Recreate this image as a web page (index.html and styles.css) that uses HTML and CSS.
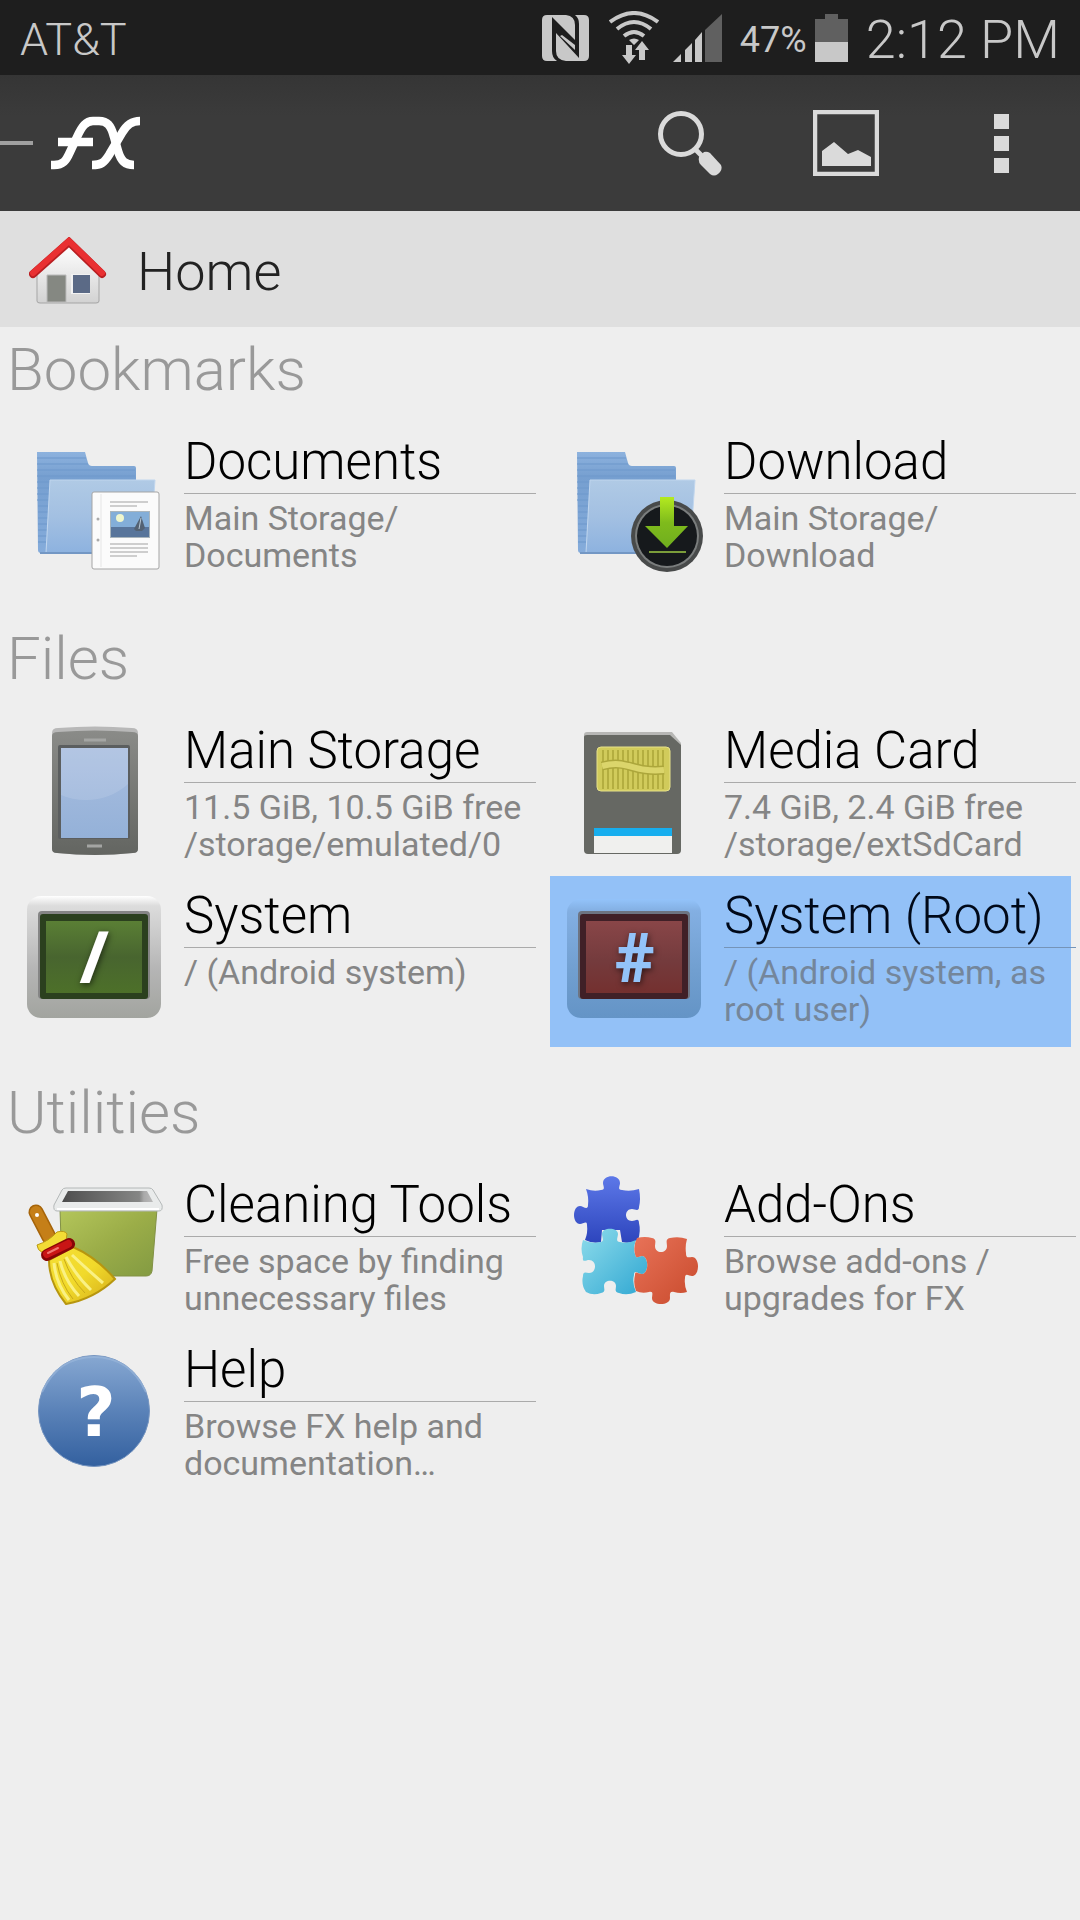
FILE: index.html
```html
<!DOCTYPE html>
<html lang="en">
<head>
<meta charset="utf-8">
<meta name="viewport" content="width=device-width, initial-scale=1">
<title>FX File Explorer</title>
<link rel="stylesheet" href="styles.css">
</head>
<body>
<svg class="defs" width="0" height="0" aria-hidden="true">
  <defs>
    <linearGradient id="folderBack" x1="0" y1="0" x2="0" y2="1"><stop offset="0" stop-color="#8db2de"/><stop offset="0.25" stop-color="#769fd0"/><stop offset="1" stop-color="#85acdb"/></linearGradient>
    <linearGradient id="folderFront" x1="0" y1="0" x2="0" y2="1"><stop offset="0" stop-color="#b0cae5"/><stop offset="0.5" stop-color="#a3c0e2"/><stop offset="1" stop-color="#8db2df"/></linearGradient>
    <linearGradient id="arrowGreen" x1="0" y1="0" x2="0" y2="1"><stop offset="0" stop-color="#b4ea20"/><stop offset="0.5" stop-color="#7fbb1c"/><stop offset="1" stop-color="#6fae1e"/></linearGradient>
    <linearGradient id="steel" x1="0" y1="0" x2="0" y2="1"><stop offset="0" stop-color="#8a8b88"/><stop offset="1" stop-color="#636561"/></linearGradient>
    <linearGradient id="glass" x1="0" y1="0" x2="0" y2="1"><stop offset="0" stop-color="#a9bee0"/><stop offset="1" stop-color="#94b1d8"/></linearGradient>
    <linearGradient id="silver" x1="0" y1="0" x2="0" y2="1"><stop offset="0" stop-color="#fff"/><stop offset="0.08" stop-color="#dcdcdc"/><stop offset="0.6" stop-color="#b5b5b5"/><stop offset="1" stop-color="#a2a49f"/></linearGradient>
    <linearGradient id="silverTint" x1="0" y1="0" x2="0" y2="1"><stop offset="0" stop-color="#93c3fa"/><stop offset="0.1" stop-color="#83afe2"/><stop offset="0.6" stop-color="#719fd0"/><stop offset="1" stop-color="#6494c6"/></linearGradient>
    <linearGradient id="green" x1="0" y1="0" x2="0" y2="1"><stop offset="0" stop-color="#5a7f35"/><stop offset="0.5" stop-color="#48652f"/><stop offset="1" stop-color="#4d7029"/></linearGradient>
    <linearGradient id="maroon" x1="0" y1="0" x2="0" y2="1"><stop offset="0" stop-color="#894648"/><stop offset="0.55" stop-color="#743b3d"/><stop offset="1" stop-color="#74302f"/></linearGradient>
    <linearGradient id="bin" x1="0" y1="0" x2="1" y2="1"><stop offset="0" stop-color="#b4c65b"/><stop offset="0.5" stop-color="#9bad48"/><stop offset="1" stop-color="#829a42"/></linearGradient>
    <linearGradient id="binInside" x1="0" y1="0" x2="1" y2="0"><stop offset="0" stop-color="#4a4a4a"/><stop offset="0.1" stop-color="#555"/><stop offset="0.85" stop-color="#858685"/><stop offset="0.9" stop-color="#aaa"/><stop offset="1" stop-color="#bbb"/></linearGradient>
    <linearGradient id="bristle" x1="0" y1="0" x2="1" y2="1"><stop offset="0" stop-color="#f4de35"/><stop offset="0.5" stop-color="#f1da2b"/><stop offset="1" stop-color="#d3aa18"/></linearGradient>
    <linearGradient id="helpBlue" x1="0" y1="0" x2="0" y2="1"><stop offset="0" stop-color="#87a8d2"/><stop offset="0.5" stop-color="#5a82b8"/><stop offset="1" stop-color="#33609f"/></linearGradient>
    <linearGradient id="pieceBlue" x1="0" y1="0" x2="0" y2="1"><stop offset="0" stop-color="#5d78e8"/><stop offset="1" stop-color="#2d45bd"/></linearGradient>
    <linearGradient id="pieceCyan" x1="0" y1="0" x2="1" y2="1"><stop offset="0" stop-color="#8edceb"/><stop offset="1" stop-color="#30a7d2"/></linearGradient>
    <linearGradient id="pieceRed" x1="0" y1="0" x2="1" y2="1"><stop offset="0" stop-color="#e87258"/><stop offset="1" stop-color="#c84a2c"/></linearGradient>
    <linearGradient id="wall" x1="0" y1="0" x2="0" y2="1"><stop offset="0" stop-color="#fff"/><stop offset="1" stop-color="#d2d2d2"/></linearGradient>
    <symbol id="folder" viewBox="0 0 184 160">
      <path d="M37 30H85L88 41Q89 44 92 44H134Q136 44 136 46V131H41Q38 131 38 128Z" fill="url(#folderBack)"/>
      <path d="M37 36H86M37 42H88M37 48H135M37 54H135M37 60H50M37 66H49M37 72H49M37 78H49M38 84H48M38 90H48M38 96H48M38 102H47M38 108H47M38 114H47M38 120H46" stroke="#6f9acd" stroke-width="2" opacity=".55"/>
      <path d="M50 58H155L150 131H46Z" fill="url(#folderFront)" stroke="#c0d6ee"/>
      <path d="M40 131H150" stroke="#7397c4" stroke-width="2"/>
    </symbol>
  </defs>
</svg>

<header class="top">
  <div class="status">
    <span class="carrier">AT&amp;T</span>
    <svg class="nfc" width="47" height="46" viewBox="0 0 47 46" role="img" aria-label="NFC">
      <path fill="#c8c8c8" d="M5 0H24Q33 1 33 10V25L10 2V36Q10 43 15 46H5Q0 46 0 41V5Q0 0 5 0ZM33 0H42Q47 0 47 5V41Q47 46 42 46H24Q14 45 14 36V18L37 43V9Q37 3 33 0Z"/>
      <path d="M18 20L33 34V27L18 13Z" fill="#1e1e1e"/>
      <path d="M18 21L33 35V30L20 20Z" fill="#c8c8c8"/>
    </svg>
    <svg class="wifi" width="50" height="53" viewBox="0 0 50 53" role="img" aria-label="Wi-Fi">
      <g fill="none" stroke="#c8c8c8" stroke-width="4"><path d="M1 11Q25-7 49 11"/><path d="M8 18Q25 4 42 18"/><path d="M15 25Q25 17 35 25"/></g>
      <path fill="#c8c8c8" d="M20 29Q25 26 30 29L25 34ZM17 34H23V44H27L20 53 13 44H17ZM33 30L40 39H36V49H30V39H26Z"/>
    </svg>
    <svg class="signal" width="49" height="48" viewBox="0 0 49 48" role="img" aria-label="Signal">
      <path fill="#c8c8c8" d="M0 48L8 40V48ZM12 36L19 29V48H12ZM22 26L29 18V48H22Z"/><path fill="#606060" d="M32 16L49 0V48H32Z"/>
    </svg>
    <span class="percent">47%</span>
    <svg class="battery" width="33" height="48" viewBox="0 0 33 48" role="img" aria-label="Battery"><path fill="#606060" d="M10 0H23V5H33V28H0V5H10Z"/><path fill="#c8c8c8" d="M0 28H33V48H0Z"/></svg>
    <time class="clock">2:12 PM</time>
  </div>
  <div class="actions">
    <button class="drawer" type="button" aria-label="Open menu">
      <svg width="142" height="60" viewBox="0 0 142 60">
        <path d="M0 30H33" stroke="#a0a0a0" stroke-width="4"/>
        <g fill="none" stroke="#fff" stroke-width="8.500">
          <path d="M51 52H54C63 52 66 48 70 39L77 24C82 13 86 8 93 8H99C107 8 111 12 114 24L118 38C121 48 125 52 134 52"/>
          <path d="M58 29H93"/>
          <path d="M140 8C132 8 127 11 122 20L109 42C104 50 101 52 92 52"/>
        </g>
      </svg>
    </button>
    <button class="action" type="button" aria-label="Search">
      <svg width="66" height="66" viewBox="0 0 66 66"><circle cx="24" cy="24" r="20.500" fill="none" stroke="#dadada" stroke-width="5"/><path d="M38 39L45 46" stroke="#dadada" stroke-width="5"/><path d="M42 47Q41 52 44 55L53 64Q57 67 61 64 66 60 64 55L53 43Q50 41 47 42Z" fill="#dadada"/></svg>
    </button>
    <button class="action" type="button" aria-label="Wallpaper">
      <svg width="66" height="66" viewBox="0 0 66 66"><path d="M2 2H64V64H2Z" fill="none" stroke="#dadada" stroke-width="4.500"/><path d="M9 41L21 32 35 44 45 40 58 47V56H9Z" fill="#dadada"/></svg>
    </button>
    <button class="action" type="button" aria-label="More options">
      <svg width="66" height="66" viewBox="0 0 66 66"><path fill="#dadada" d="M25 4H40V19H25ZM25 26H40V41H25ZM25 48H40V63H25Z"/></svg>
    </button>
  </div>
</header>

<nav class="crumb">
  <svg width="80" height="70" viewBox="0 0 80 70" aria-hidden="true">
    <path d="M8 34L40 8 70 34V64Q70 66 67 66H11Q8 66 8 64Z" fill="url(#wall)" stroke="#a5a5a5"/>
    <path d="M18 38H37V65H18Z" fill="#858882" stroke="#bbb"/><path d="M42 37H61V57H42Z" fill="#f2f2f2"/><path d="M44 38H61V56H44Z" fill="#5b6a86"/>
    <path d="M4 37L40 5 73 37" fill="none" stroke="#b91f22" stroke-width="8" stroke-linecap="round"/>
    <path d="M4 36L40 4 73 36" fill="none" stroke="#e93032" stroke-width="6" stroke-linecap="round"/>
  </svg>
  <a href="#home">Home</a>
</nav>

<main>
  <section>
    <h2>Bookmarks</h2>
    <div class="grid">
      <a class="item" href="#documents">
        <svg class="icon" viewBox="0 0 184 160" aria-hidden="true">
          <use href="#folder"/>
          <rect x="92" y="70" width="67" height="77" rx="2" fill="#fbfbfb" stroke="#a5a5a5"/>
          <path d="M101 72V145" stroke="#e5e5e5"/><circle cx="98" cy="97" r="1.500" fill="#aaa"/><circle cx="98" cy="118" r="1.500" fill="#aaa"/>
          <path d="M110 80H148M110 84H137M110 122H148M110 126H148M110 130H148M110 134H137" stroke="#c0c0c0" stroke-width="1.500"/>
          <path d="M110 89H150V116H110Z" fill="#a9b5bc"/><path d="M111 90H149V105H111Z" fill="#83aed8"/><path d="M111 105H149V115H111Z" fill="#58759b"/>
          <circle cx="120" cy="96" r="4" fill="#eff6cd"/><path d="M134 107L141 94 145 106 142 109H136Z" fill="#536273"/><path d="M139 107L141 96" stroke="#b9c9d6"/>
        </svg>
        <span class="text"><span class="title">Documents</span><span class="sub">Main Storage/<br>Documents</span></span>
      </a>
      <a class="item" href="#download">
        <svg class="icon" viewBox="0 0 184 160" aria-hidden="true">
          <use href="#folder"/>
          <circle cx="127" cy="114" r="36" fill="#484a4a"/><circle cx="127" cy="114" r="32" fill="#7a7d7d"/><circle cx="127" cy="114" r="30" fill="#16191c"/>
          <path d="M120 75H134V104H148L127 126 105 104H120Z" fill="url(#arrowGreen)"/><path d="M109 130H146" stroke="#7b9d3a" stroke-width="2"/>
        </svg>
        <span class="text"><span class="title">Download</span><span class="sub">Main Storage/<br>Download</span></span>
      </a>
    </div>
  </section>

  <section>
    <h2>Files</h2>
    <div class="grid">
      <a class="item" href="#main-storage">
        <svg class="icon" viewBox="0 0 184 160" aria-hidden="true">
          <path d="M52 22Q52 17 58 17Q95 14 132 17Q138 17 138 22V138Q138 142 133 142Q95 146 57 142Q52 142 52 138Z" fill="#b8b8b8"/>
          <path d="M52 25Q52 21 58 21Q95 18 132 21Q138 21 138 25V138Q138 142 133 142Q95 146 57 142Q52 142 52 138Z" fill="url(#steel)"/>
          <rect x="58" y="34" width="72" height="94" rx="2" fill="#5b5e5f"/><rect x="61" y="37" width="67" height="90" fill="url(#glass)"/>
          <path d="M61 37H128V73Q110 89 86 89 72 89 61 84Z" fill="#fff" opacity=".12"/>
          <path d="M84 29H106M87 135H102" stroke="#a4a5a3" stroke-width="3"/>
        </svg>
        <span class="text"><span class="title">Main Storage</span><span class="sub">11.5 GiB, 10.5 GiB free<br>/storage/emulated/0</span></span>
      </a>
      <a class="item" href="#media-card">
        <svg class="icon" viewBox="0 0 184 160" aria-hidden="true">
          <path d="M47 21H132L141 32V36H44V24Q44 21 47 21Z" fill="#b7b7b5"/>
          <path d="M47 24H130L141 34V139Q141 143 137 143H48Q44 143 44 139V26Q44 24 47 24Z" fill="#666863"/>
          <rect x="57" y="36" width="73" height="44" rx="4" fill="#d1cb5b" stroke="#e6e18b"/>
          <path d="M63 39V78M68 39V78M73 39V78M78 39V78M83 39V78M88 39V78M93 39V78M98 39V78M103 39V78M108 39V78M113 39V78M118 39V78M123 39V78" stroke="#aaa538" stroke-width="1.500"/>
          <path d="M62 55C88 48 92 62 124 59" fill="none" stroke="#aca63b" stroke-width="9"/><path d="M62 55C88 48 92 62 124 59" fill="none" stroke="#dbd56b" stroke-width="6"/>
          <path d="M54 117H132V126H54Z" fill="#17aeee"/><path d="M54 125H132V142H54Z" fill="#f0f0ee"/>
        </svg>
        <span class="text"><span class="title">Media Card</span><span class="sub">7.4 GiB, 2.4 GiB free<br>/storage/extSdCard</span></span>
      </a>
      <a class="item" href="#system">
        <svg class="icon" viewBox="0 0 184 160" aria-hidden="true">
          <rect x="27" y="20" width="134" height="122" rx="14" fill="url(#silver)"/>
          <rect x="38" y="35" width="112" height="88" rx="4" fill="#858585"/><rect x="40" y="38" width="108" height="85" rx="3" fill="#2b401e"/>
          <rect x="46" y="45" width="96" height="72" fill="url(#green)"/>
          <text class="glyph slash" x="94" y="107" fill="#fff">/</text>
        </svg>
        <span class="text"><span class="title">System</span><span class="sub">/ (Android system)</span></span>
      </a>
      <a class="item selected" href="#system-root">
        <svg class="icon" viewBox="0 0 184 160" aria-hidden="true">
          <rect x="27" y="23" width="134" height="119" rx="14" fill="url(#silverTint)"/>
          <rect x="38" y="35" width="112" height="88" rx="4" fill="#6d7482"/><rect x="40" y="38" width="108" height="85" rx="3" fill="#402027"/>
          <rect x="46" y="45" width="96" height="72" fill="url(#maroon)"/>
          <text class="glyph hash" x="95" y="106" fill="#93c3f9">#</text>
        </svg>
        <span class="text"><span class="title">System (Root)</span><span class="sub">/ (Android system, as<br>root user)</span></span>
      </a>
    </div>
  </section>

  <section>
    <h2>Utilities</h2>
    <div class="grid">
      <a class="item" href="#cleaning">
        <svg class="icon" viewBox="0 0 184 160" aria-hidden="true">
          <path d="M60 44H157L152 106Q151 111 146 111H66Q62 111 62 106Z" fill="url(#bin)" stroke="#829145"/>
          <path d="M66 23H149Q152 23 153 25L162 40Q163 46 159 46H57Q53 46 54 40L62 25Q63 23 66 23Z" fill="#e9ebeb" stroke="#b4b8b8"/>
          <path d="M68 26H147L153 37H62Z" fill="url(#binInside)"/>
          <path d="M57 44H159" stroke="#fff" stroke-width="2"/>
          <path d="M36 47L49 72" stroke="#a66409" stroke-width="15" stroke-linecap="round"/><path d="M36 47L49 72" stroke="#c57f18" stroke-width="12" stroke-linecap="round"/><circle cx="37" cy="50" r="2" fill="#fff"/>
          <path d="M37 80Q49 76 57 67Q65 65 67 69L66 76 43 88Q37 85 37 80Z" fill="#f3dc35" stroke="#bb9914"/>
          <path d="M49 95L73 82Q96 92 115 114Q94 134 66 139Q49 118 49 95Z" fill="url(#bristle)" stroke="#b7960f" stroke-width="2"/>
          <path d="M54 98Q56 119 69 135M60 96Q65 116 79 131M66 92Q77 112 91 125M72 90Q88 105 103 118" fill="none" stroke="#faf184" stroke-width="3"/>
          <path d="M57 98Q61 119 73 134M64 94Q71 114 85 128" fill="none" stroke="#c8a91a"/>
          <path d="M47 90L69 79" stroke="#870607" stroke-width="12" stroke-linecap="round"/><path d="M47 89L68 79" stroke="#c91515" stroke-width="8" stroke-linecap="round"/><path d="M48 88L58 83" stroke="#ef7771" stroke-width="2" stroke-linecap="round"/>
        </svg>
        <span class="text"><span class="title">Cleaning Tools</span><span class="sub">Free space by finding<br>unnecessary files</span></span>
      </a>
      <a class="item" href="#addons">
        <svg class="icon" viewBox="0 0 184 160" aria-hidden="true">
          <path d="M46 24Q54 27 61 25C66 25 63 21 63 18C63 9 80 9 80 18C80 21 77 25 82 25Q90 27 99 24Q101 34 99 42C99 47 95 44 92 44C84 44 84 56 92 56C95 56 99 52 99 58Q101 66 98 75Q90 79 82 77L80 65H62L61 77Q53 79 45 75Q48 68 47 60C47 55 43 59 40 59C32 59 32 41 40 41C43 41 48 46 48 40Q49 32 46 24Z" fill="url(#pieceBlue)"/>
          <path d="M43 75Q52 79 60 77C65 77 62 72 62 69C62 62 78 62 78 69C78 72 75 77 80 77Q88 79 96 75Q93 83 95 89C96 95 99 91 102 91C109 91 109 109 102 109C98 109 94 104 94 110Q92 118 96 127Q87 131 79 128C74 127 76 124 76 121C76 114 64 114 64 121C64 124 66 127 61 128Q53 131 46 127Q41 120 43 111C43 106 46 108 49 108C57 108 57 95 49 95C46 95 42 98 43 92Q40 84 43 75Z" fill="url(#pieceCyan)"/>
          <path d="M97 73Q105 71 112 73C117 74 115 78 115 81C115 89 127 89 127 81C127 78 125 74 130 73Q139 71 147 74Q145 81 146 88C146 94 149 92 152 92C160 92 160 111 152 111C149 111 145 107 145 113Q144 120 147 127Q141 129 134 127C129 126 130 130 130 133C130 141 112 141 112 133C112 130 114 126 109 127Q102 129 96 126Q93 118 95 110C95 105 98 109 102 109C109 109 109 91 102 91C99 91 96 95 95 89Q93 81 97 73Z" fill="url(#pieceRed)"/>
        </svg>
        <span class="text"><span class="title">Add-Ons</span><span class="sub">Browse add-ons /<br>upgrades for FX</span></span>
      </a>
      <a class="item" href="#help">
        <svg class="icon" viewBox="0 0 184 160" aria-hidden="true">
          <circle cx="94" cy="81" r="55.500" fill="url(#helpBlue)" stroke="#7695c0"/>
          <path d="M42 62Q58 27 94 27T146 62" fill="none" stroke="#9db9dc" stroke-width="2" opacity=".6"/>
          <text class="glyph question" x="96" y="106" fill="#fff">?</text>
        </svg>
        <span class="text"><span class="title">Help</span><span class="sub">Browse FX help and<br>documentation…</span></span>
      </a>
    </div>
  </section>
</main>
</body>
</html>
```
FILE: styles.css
```css
* { box-sizing: border-box; }

body {
  margin: 0;
  min-height: 100vh;
  background: #eee;
  color: #000;
  font-family: Roboto, "Noto Sans", sans-serif;
  font-weight: 300;
}

a { color: inherit; text-decoration: none; }
svg { display: block; flex: none; }
.defs { position: absolute; }

.status {
  display: flex;
  align-items: center;
  height: 75px;
  padding: 0 20px;
  background: #1e1e1e;
  color: #c8c8c8;
}
.carrier, .percent, .clock { padding-top: 4px; line-height: 76px; }
.carrier { flex: 1; font-size: 45px; }
.wifi { margin-left: 20px; }
.signal { margin-left: 14px; }
.percent { margin-left: 18px; font-size: 36px; font-weight: 400; }
.battery { margin-left: 8px; }
.clock { margin-left: 18px; font-size: 54px; }

.actions {
  display: flex;
  align-items: center;
  height: 136px;
  background: linear-gradient(#353535, #3b3b3b 30%);
}
.actions button {
  display: flex;
  align-items: center;
  justify-content: center;
  height: 100%;
  padding: 0;
  border: 0;
  background: none;
}
.actions .drawer { margin-right: auto; }
.actions .action { width: 156px; }

.crumb {
  display: flex;
  align-items: center;
  gap: 28px;
  height: 116px;
  padding: 6px 0 0 29px;
  background: #dfdfdf;
  color: #222;
  font-size: 54px;
  line-height: 64px;
}

section { padding-bottom: 29px; }
h2 {
  margin: 0;
  padding: 7px 7px 16px;
  color: #999;
  font-size: 60px;
  font-weight: 300;
  line-height: 72px;
}
.grid { display: grid; grid-template-columns: 1fr 1fr; }

.item {
  position: relative;
  display: flex;
  min-height: 165px;
  padding-right: 4px;
}
.icon { position: relative; width: 184px; height: 160px; }
.text { position: relative; flex: 1; min-width: 0; }
.title {
  display: block;
  padding: 10px 0 1px;
  border-bottom: 1px solid #aaa;
  font-size: 51px;
  line-height: 60px;
  white-space: nowrap;
}
.sub {
  display: block;
  padding-top: 6px;
  color: #858585;
  font-size: 34px;
  font-weight: 400;
  line-height: 37px;
  white-space: nowrap;
}

.selected::before {
  content: "";
  position: absolute;
  inset: 0 9px -6px 10px;
  background: #93c1f7;
}
.selected .title { border-color: #7594b8; color: #000919; }
.selected .sub { color: #74869b; }

.glyph { font-family: "DejaVu Sans", sans-serif; font-weight: 700; text-anchor: middle; }
.slash, .hash { filter: drop-shadow(1px 2px 3px rgb(0 0 0 / 60%)); }
.slash { font-family: "Open Sans", sans-serif; font-size: 72px; }
.hash { font-family: Roboto, sans-serif; font-size: 68px; font-weight: 900; }
.question { font-size: 68px; }
```
